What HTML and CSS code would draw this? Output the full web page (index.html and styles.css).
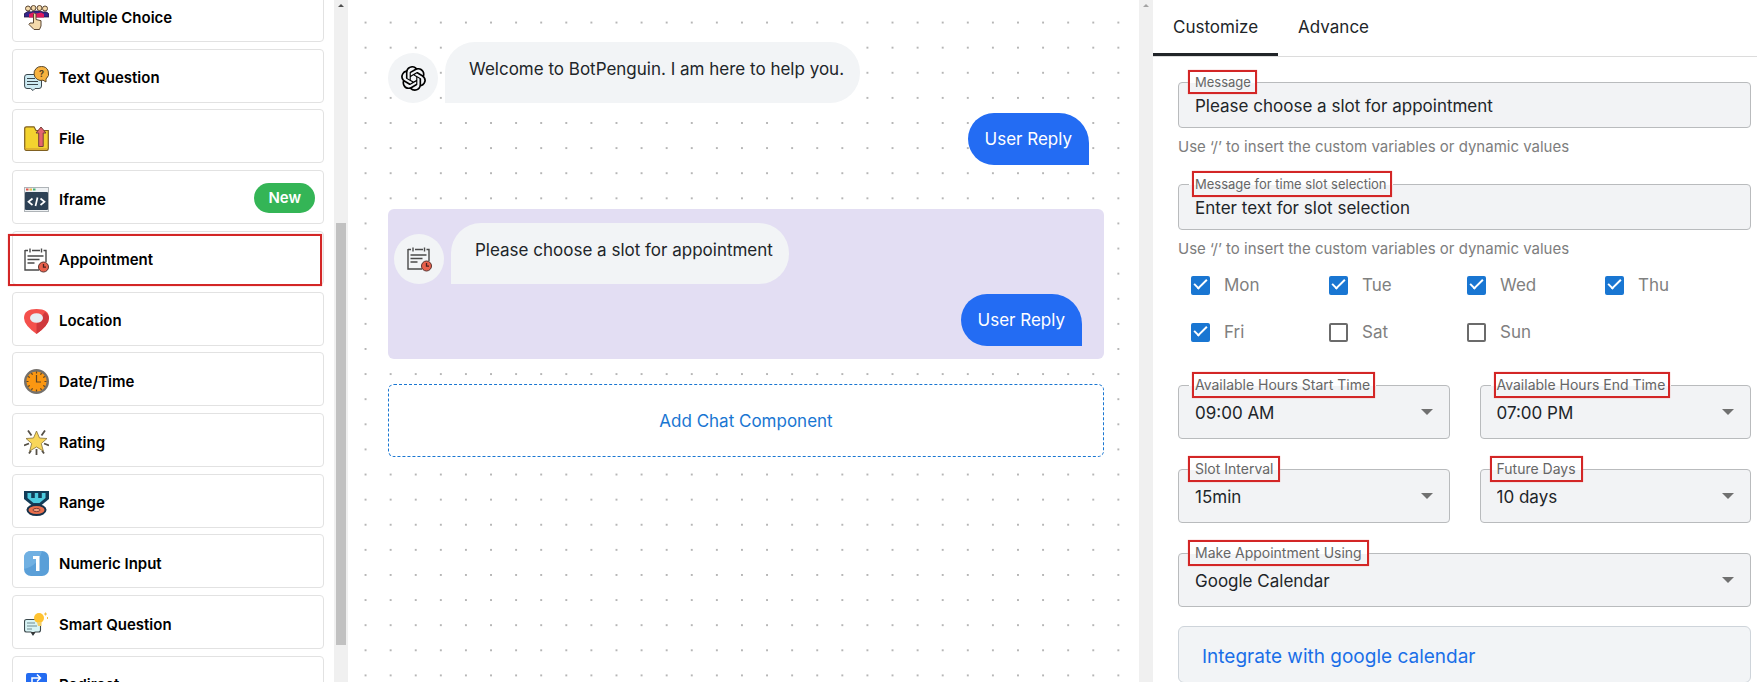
FILE: index.html
```html
<!DOCTYPE html>
<html lang="en">
<head>
<meta charset="utf-8">
<title>Bot builder</title>
<meta name="viewport" content="width=device-width, initial-scale=1">
<link rel="stylesheet" href="styles.css">
</head>
<body>
<svg width="0" height="0" class="defs" aria-hidden="true">
  <symbol id="calendar" viewBox="0 0 25 25">
    <path d="M1 2.500h3M8 2.500h8M19.500 2.500H22V14M1 2V22h14" fill="none" stroke="#4a4a4a" stroke-width="1.400"/>
    <path d="M6 .5v4M17.500 .5v4" stroke="#4a4a4a" stroke-width="1.400"/>
    <path d="M3.500 8h16M3.500 11.500h12M3.500 15h7" stroke="#4a4a4a" stroke-width="1.500"/>
    <circle cx="19.500" cy="19" r="5" fill="#e8604c" stroke="#5a3430" stroke-width="1"/>
    <path d="M19.500 16v3.200H22" fill="none" stroke="#4a2020" stroke-width="1.300"/>
  </symbol>
  <symbol id="caret" viewBox="0 0 12 6"><path d="M0 0h12L6 6z" fill="#707070"/></symbol>
</svg>
<main class="app">
  <aside class="sidebar">
    <div class="component-list">
      <button class="component" type="button">
        <svg class="icon" viewBox="0 0 25 25"><path d="M0 12V9Q4 5 7 7l3-1h6l3 1q4-1 6 2v3z" fill="#32258a" stroke="#2a1a3c" stroke-width=".8"/><path d="M5 12.500V9L9 7.500l3.500 1L17 7.500l3 1.500v3.500z" fill="#e0195c"/><g fill="#f3d9ab" stroke="#5b4632" stroke-width="1"><circle cx="4" cy="3.500" r="2.500"/><circle cx="9.500" cy="3" r="2.500"/><circle cx="15.500" cy="3" r="2.500"/><circle cx="21" cy="3.500" r="2.500"/><path d="M9.500 18V9q1.300-2 2.500 0v5.500l5 1.200V21l-1.500 3.500H10L5 19.500 6 18z"/></g></svg>
        <span>Multiple Choice</span>
      </button>
      <button class="component" type="button">
        <svg class="icon" viewBox="0 0 25 25"><path d="M3 8.500h12q2.500 0 2.500 2.500v9q0 2.500-2.500 2.500h-4L9 24.500 6.500 22.500H3Q.6 22.500.6 20v-9Q.6 8.500 3 8.500z" fill="#cdebf3" stroke="#39464c"/><path d="M3 12.500h8M3 15.500h11M3 18.500h11" stroke="#39464c"/><path d="M17.500.5a7 7 0 0 1 4.500 12.500v3l-3-1.800a7 7 0 1 1-1.500-13.700z" fill="#f7b23f" stroke="#59482c"/><text class="icon-mark" x="17.500" y="10.500">?</text></svg>
        <span>Text Question</span>
      </button>
      <button class="component" type="button">
        <svg class="icon" viewBox="0 0 25 25"><path d="M.7 2.500Q.7.8 2.500.8H10l2 3.700h12.300v18q0 2-2 2H3q-2.300 0-2.300-2z" fill="#f3d32f" stroke="#806020" stroke-width="1.200"/><path d="M.8 21.500q1 1.800 3 1.500h19" fill="none" stroke="#d7a630" stroke-width="1.500"/><path d="M17 1l5 6h-2.800v13.500h-4.500V7H12z" fill="#e5646e" stroke="#744038"/></svg>
        <span>File</span>
      </button>
      <button class="component" type="button">
        <svg class="icon" viewBox="0 0 25 25"><rect x=".5" y=".5" width="24" height="24" fill="#eef1f3" stroke="#aeb3b7"/><path d="M1 6q0-1 1-1h21q1 0 1 1v16q0 1-1 1H2q-1 0-1-1z" fill="#2d4155"/><g><path fill="#e25548" d="M2 1.500h2.500v2H2z"/><path fill="#e9bd45" d="M5.500 1.500H8v2H5.500z"/><path fill="#46b276" d="M9 1.500h2.500v2H9z"/></g><path d="M8.500 11.500l-4 3.300 4 3.200M16.500 11.500l4 3.300-4 3.200M13.500 10.500l-2 8.500" fill="none" stroke="#fff" stroke-width="1.700"/></svg>
        <span>Iframe</span><span class="new-tag">New</span>
      </button>
      <button class="component component-marked" type="button">
        <svg class="icon"><use href="#calendar"/></svg>
        <span>Appointment</span>
      </button>
      <button class="component" type="button">
        <svg class="icon" viewBox="0 0 25 25"><path d="M12.500 0Q25 0 25 9q0 7-12.500 16Q0 16 0 9 0 0 12.500 0z" fill="#f4504c"/><path d="M21 3q4 3 4 6 0 7-12.500 16V15z" fill="#cf383c"/><ellipse cx="12.500" cy="9" rx="6.500" ry="4.800" fill="#e7edf3"/></svg>
        <span>Location</span>
      </button>
      <button class="component" type="button">
        <svg class="icon" viewBox="0 0 25 25"><circle cx="12.500" cy="12.500" r="11.300" fill="#fb9712" stroke="#75716c" stroke-width="2.400"/><path d="M12.500 6v7H17M12.500 2.500v2M12.500 20.500v2M2.500 12.500h2M20.500 12.500h2M7.500 4l1 1.800M17.500 4l-1 1.800M4 7.500l1.800 1M21 7.500l-1.800 1M4 17.500l1.800-1M21 17.500l-1.800-1M7.500 21l1-1.800M17.500 21l-1-1.800" fill="none" stroke="#5c4425" stroke-width="1.200"/></svg>
        <span>Date/Time</span>
      </button>
      <button class="component" type="button">
        <svg class="icon" viewBox="0 0 25 25"><path d="M4 .5l3.500 5M21 .5l-3.500 5M0 15.500l5-2M25 15.500l-5-2M12.500 19v6M7 20.500l-2 3M18 20.500l2 3" stroke="#555047" stroke-width="1.800"/><path d="M12.500 1l3 7 7.500.5-5.700 5 2 7.500-6.800-4L5.700 21l2-7.500L2 8.500 9.500 8z" fill="#f8d65a" stroke="#85713b" stroke-width=".8"/></svg>
        <span>Rating</span>
      </button>
      <button class="component" type="button">
        <svg class="icon" viewBox="0 0 25 25"><path d="M0 0h25v8l-8 6.500H8L0 8z" fill="#123c58"/><path d="M3.500 2h3.700v5h3.600V2h3.400v5h3.600V2h3.700v5l-6 5h-6L3.500 7z" fill="#4ecbe0"/><ellipse cx="12.500" cy="19" rx="9" ry="5" fill="#e96f4b" stroke="#16324b" stroke-width="2"/><ellipse cx="12.500" cy="19" rx="3.600" ry="1.600" fill="#f5a17d" stroke="#7b3b39"/></svg>
        <span>Range</span>
      </button>
      <button class="component" type="button">
        <svg class="icon" viewBox="0 0 25 25"><rect width="25" height="25" rx="7" fill="#5a9fd8"/><path d="M7 0h11q-4 15-18 18V7q0-7 7-7z" fill="#70b0e2"/><path d="M9 5h6.500v15H12V8H9z" fill="#fff"/></svg>
        <span>Numeric Input</span>
      </button>
      <button class="component" type="button">
        <svg class="icon" viewBox="0 0 25 25"><path d="M2.500 7.500h12q2 0 2 2V18q0 2-2 2H11l-2 3-2-3H2.500q-2 0-2-2V9.500q0-2 2-2z" fill="#d7f3f4" stroke="#3c494d" stroke-width="1.100"/><path d="M3 11h8M3 14h10M3 17h5" stroke="#718b91"/><path d="M7 20h4.500L9 23z" fill="#333"/><circle cx="15" cy="6" r="5" fill="#ffc331"/><path d="M13 10h4.500v4H14z" fill="#f5ce62"/><path d="M21.500.5v3M20 2h3M23.500 5v2" stroke="#f4bd43"/></svg>
        <span>Smart Question</span>
      </button>
      <button class="component" type="button">
        <svg class="icon" viewBox="0 0 25 25"><rect x="2" width="21" height="24" rx="2" fill="#246cf1"/><path d="M8 12V5h8M13 1.500L16.500 5 13 8.500" fill="none" stroke="#fff" stroke-width="1.500"/></svg>
        <span>Redirect</span>
      </button>
    </div>
    <div class="scrollbar"><svg class="scroll-arrow" viewBox="0 0 6 3"><path d="M0 3h6L3 0z" fill="#505050"/></svg><div class="scroll-thumb"></div></div>
  </aside>

  <section class="canvas">
    <div class="flow">
      <div class="block">
        <div class="bot-row">
          <div class="avatar"><svg class="icon" viewBox="0 0 24 24"><path d="M22.2819 9.8211a5.9847 5.9847 0 0 0-.5157-4.9108 6.0462 6.0462 0 0 0-6.5098-2.9A6.0651 6.0651 0 0 0 4.9807 4.1818a5.9847 5.9847 0 0 0-3.9977 2.9 6.0462 6.0462 0 0 0 .7427 7.0966 5.98 5.98 0 0 0 .511 4.9107 6.051 6.051 0 0 0 6.5146 2.9001A5.9847 5.9847 0 0 0 13.2599 24a6.0557 6.0557 0 0 0 5.7718-4.2058 5.9894 5.9894 0 0 0 3.9977-2.9001 6.0557 6.0557 0 0 0-.7475-7.0729zm-9.022 12.6081a4.4755 4.4755 0 0 1-2.8764-1.0408l.1419-.0804 4.7783-2.7582a.7948.7948 0 0 0 .3927-.6813v-6.7369l2.02 1.1686a.071.071 0 0 1 .038.052v5.5826a4.504 4.504 0 0 1-4.4945 4.4944zm-9.6607-4.1254a4.4708 4.4708 0 0 1-.5346-3.0137l.142.0852 4.783 2.7582a.7712.7712 0 0 0 .7806 0l5.8428-3.3685v2.3324a.0804.0804 0 0 1-.0332.0615L9.74 19.9502a4.4992 4.4992 0 0 1-6.1408-1.6464zM2.3408 7.8956a4.485 4.485 0 0 1 2.3655-1.9728V11.6a.7664.7664 0 0 0 .3879.6765l5.8144 3.3543-2.0201 1.1685a.0757.0757 0 0 1-.071 0l-4.8303-2.7865A4.504 4.504 0 0 1 2.3408 7.872zm16.5963 3.8558L13.1038 8.364 15.1192 7.2a.0757.0757 0 0 1 .071 0l4.8303 2.7913a4.4944 4.4944 0 0 1-.6765 8.1042v-5.6772a.79.79 0 0 0-.407-.667zm2.0107-3.0231l-.142-.0852-4.7735-2.7818a.7759.7759 0 0 0-.7854 0L9.409 9.2297V6.8974a.0662.0662 0 0 1 .0284-.0615l4.8303-2.7866a4.4992 4.4992 0 0 1 6.6802 4.66zM8.3065 12.863l-2.02-1.1638a.0804.0804 0 0 1-.038-.0567V6.0742a4.4992 4.4992 0 0 1 7.3757-3.4537l-.142.0805L8.704 5.459a.7948.7948 0 0 0-.3927.6813zm1.0976-2.3654l2.602-1.4998 2.6069 1.4998v2.9994l-2.5974 1.4997-2.6067-1.4997Z"/></svg></div>
          <p class="bubble">Welcome to BotPenguin. I am here to help you.</p>
        </div>
        <p class="reply">User Reply</p>
      </div>
      <div class="block block-selected">
        <div class="bot-row">
          <div class="avatar"><svg class="icon"><use href="#calendar"/></svg></div>
          <p class="bubble">Please choose a slot for appointment</p>
        </div>
        <p class="reply">User Reply</p>
      </div>
      <button class="add-component" type="button">Add Chat Component</button>
    </div>
    <div class="scrollbar"><svg class="scroll-arrow" viewBox="0 0 6 3"><path d="M0 3h6L3 0z" fill="#a3a3a3"/></svg></div>
  </section>

  <section class="panel">
    <nav class="tabs">
      <button class="tab tab-active" type="button">Customize</button>
      <button class="tab" type="button">Advance</button>
    </nav>
    <form class="settings">
      <div class="field">
        <label class="field-label label-small" for="message">Message</label>
        <input class="control" id="message" type="text" value="Please choose a slot for appointment">
      </div>
      <p class="hint">Use ‘/’ to insert the custom variables or dynamic values</p>
      <div class="field">
        <label class="field-label label-small label-snug" for="slot-message">Message for time slot selection</label>
        <input class="control" id="slot-message" type="text" value="Enter text for slot selection">
      </div>
      <p class="hint">Use ‘/’ to insert the custom variables or dynamic values</p>
      <div class="days">
        <label class="day"><input type="checkbox" checked>Mon</label>
        <label class="day"><input type="checkbox" checked>Tue</label>
        <label class="day"><input type="checkbox" checked>Wed</label>
        <label class="day"><input type="checkbox" checked>Thu</label>
        <label class="day"><input type="checkbox" checked>Fri</label>
        <label class="day"><input type="checkbox">Sat</label>
        <label class="day"><input type="checkbox">Sun</label>
      </div>
      <div class="selects">
        <div class="field">
          <label class="field-label label-snug" for="start">Available Hours Start Time</label>
          <select class="control control-select" id="start"><option>09:00 AM</option></select>
          <svg class="caret"><use href="#caret"/></svg>
        </div>
        <div class="field">
          <label class="field-label label-snug" for="end">Available Hours End Time</label>
          <select class="control control-select" id="end"><option>07:00 PM</option></select>
          <svg class="caret"><use href="#caret"/></svg>
        </div>
        <div class="field">
          <label class="field-label" for="interval">Slot Interval</label>
          <select class="control control-select" id="interval"><option>15min</option></select>
          <svg class="caret"><use href="#caret"/></svg>
        </div>
        <div class="field">
          <label class="field-label" for="future">Future Days</label>
          <select class="control control-select" id="future"><option>10 days</option></select>
          <svg class="caret"><use href="#caret"/></svg>
        </div>
        <div class="field field-wide">
          <label class="field-label" for="provider">Make Appointment Using</label>
          <select class="control control-select" id="provider"><option>Google Calendar</option></select>
          <svg class="caret"><use href="#caret"/></svg>
        </div>
      </div>
      <div class="integration"><a href="#integrate">Integrate with google calendar</a></div>
    </form>
  </section>
</main>
</body>
</html>
```

FILE: styles.css
```css
*, *::before, *::after { box-sizing: border-box; }
html, body { height: 100%; }
body {
  margin: 0;
  overflow: hidden;
  background: #fff;
  color: #212529;
  font: 400 17px/24px Inter, "Liberation Sans", sans-serif;
}
p { margin: 0; }
button, input, select { font: inherit; color: inherit; margin: 0; }
button { cursor: pointer; }
.defs { position: absolute; }
.icon { display: block; flex: none; width: 25px; height: 25px; }
.icon-mark { font: 700 9px Inter, sans-serif; text-anchor: middle; fill: #59401c; }

.app {
  display: grid;
  grid-template-columns: 348px minmax(0, 1fr) 604px;
  height: 100%;
}
.sidebar, .canvas { display: flex; min-height: 0; overflow: hidden; }

.scrollbar {
  flex: none;
  width: 14px;
  padding: 4px 2px 0;
  background: #f0f0f0;
}
.scroll-arrow { display: block; width: 6px; height: 3px; margin: 0 auto; }
.scroll-thumb { height: 422px; margin-top: 216px; background: #c1c1c1; }

/* Component list */
.component-list {
  flex: 1;
  display: flex;
  flex-direction: column;
  justify-content: space-between;
  margin: -12px 0 -28px;
  padding: 0 10px 0 12px;
}
.component {
  position: relative;
  display: flex;
  flex: none;
  align-items: center;
  gap: 10px;
  height: 54px;
  padding: 5px 8px 0 11px;
  border: 1px solid #e2e2e2;
  border-radius: 4px;
  background: #fff;
  color: #000;
  font-size: 15px;
  font-weight: 600;
  text-align: left;
}
.new-tag {
  margin: 0 0 4px auto;
  padding: 3px 14px;
  border-radius: 15px;
  background: #34b556;
  color: #fff;
}
.component-marked::after {
  content: "";
  position: absolute;
  inset: 2px 1px -2px -5px;
  border: 2px solid #d32626;
  box-shadow: 0 0 1px #e88;
}

/* Conversation */
.canvas { position: relative; }
.canvas::before {
  content: "";
  position: absolute;
  inset: 10px 22px -6px 5px;
  background: radial-gradient(circle, #aaa 0, #bbb 1px, transparent 1px) 0 0 / 25px 25px round;
}
.flow { position: relative; flex: 1; padding: 42px 35px 0 40px; }
.block { display: flex; flex-direction: column; gap: 10px; padding: 0 15px 44px 0; }
.block-selected {
  margin-bottom: 25px;
  padding: 14px 22px 13px 6px;
  border-radius: 6px;
  background: #e3def3;
}
.bot-row { display: flex; align-items: flex-end; gap: 7px; }
.avatar {
  display: grid;
  place-items: center;
  width: 50px;
  height: 50px;
  border-radius: 50%;
  background: #f2f4f6;
}
.bubble {
  padding: 15px 16px 22px 24px;
  border-radius: 30px 30px 30px 0;
  background: #f2f4f6;
}
.reply {
  align-self: flex-end;
  padding: 14px 17px;
  border-radius: 26px 30px 0 26px;
  background: #236cf3;
  color: #fff;
}
.add-component {
  display: block;
  width: 100%;
  height: 73px;
  border: 1px dashed #1976d2;
  border-radius: 6px;
  background: #fff;
  color: #1976d2;
}

/* Settings panel */
.panel { min-width: 0; overflow: hidden; }
.tabs { display: flex; border-bottom: 1px solid #dcdcdc; }
.tab {
  height: 56px;
  padding: 0 20px;
  border: 0;
  border-bottom: 3px solid transparent;
  background: none;
}
.tab-active { border-bottom-color: #212529; }
.settings { padding: 25px 6px 0 25px; }
.field { position: relative; }
.field-label {
  position: absolute;
  top: -12px;
  left: 11px;
  padding: 0 6px;
  background: linear-gradient(#fff 54%, #f2f3f5 54%);
  color: #666;
  font-size: 14px;
  line-height: 24px;
  white-space: nowrap;
}
.label-small { font-size: 13px; }
.field-label::after {
  content: "";
  position: absolute;
  inset: -1px;
  border: 2px solid #d32626;
  box-shadow: 0 0 1px #e88;
}
.label-small::after { inset: 0 0 0 -1px; }
.label-snug::after { inset: -1px 1px -1px 3px; }
.control {
  display: block;
  width: 100%;
  height: 46px;
  padding: 2px 16px 0;
  border: 1px solid #b9bbbd;
  border-radius: 4px;
  background: #f2f3f5;
  outline: none;
}
.control-select { height: 54px; appearance: none; }
.caret {
  position: absolute;
  top: 24px;
  right: 17px;
  width: 12px;
  height: 6px;
  pointer-events: none;
}
.hint { padding: 7px 0 25px; color: #7d7d7d; font-size: 15px; }
.days {
  display: grid;
  grid-template-columns: repeat(4, 138px);
  row-gap: 23px;
  padding: 0 0 41px 13px;
}
.day { display: flex; align-items: center; gap: 14px; color: #808080; }
.day input {
  appearance: none;
  display: grid;
  width: 19px;
  height: 19px;
  border: 2px solid #6b6b6b;
  border-radius: 2px;
}
.day input:checked { border-color: #1976d2; background: #1976d2; }
.day input:checked::after {
  content: "";
  width: 13px;
  height: 7px;
  margin: 1px;
  border: solid #fff;
  border-width: 0 0 2px 2px;
  transform: rotate(-45deg);
}
.hint + .days { margin-top: -13px; }
.selects { display: grid; grid-template-columns: 1fr 1fr; gap: 30px; }
.field-wide { grid-column: 1 / -1; }
.integration {
  margin-top: 19px;
  padding: 18px 23px 13px;
  border: 1px solid #ced4da;
  border-radius: 6px;
  background: #f2f4f6;
  font-size: 19px;
}
.integration a { color: #1a6fe8; text-decoration: none; }
```
